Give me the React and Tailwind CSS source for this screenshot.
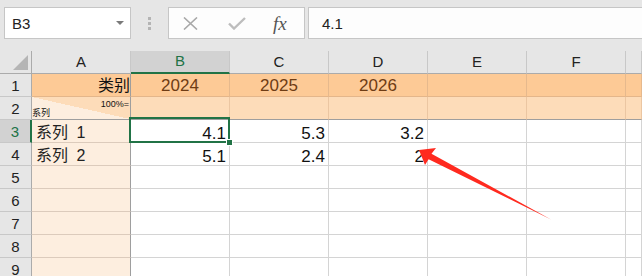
import React from "react";

const NUM = "font-['Liberation_Sans','Noto_Sans_CJK_SC',sans-serif]";

function ColHead({ label, selected }) {
  return (
    <div
      className={
        "flex items-center justify-center text-[15px] border-r border-b " +
        (selected
          ? "bg-[#d2d2d2] text-[#217346] border-r-[#c8c8c8] border-b-2 border-b-[#217346]"
          : "bg-[#e6e6e6] text-[#222] border-r-[#c8c8c8] border-b-[#ababab]")
      }
    >
      {label}
    </div>
  );
}

function RowHead({ n, selected }) {
  return (
    <div
      className={
        "flex items-center justify-center pt-[2px] text-[15px] border-b border-b-[#c8c8c8] " +
        (selected
          ? "bg-[#d2d2d2] text-[#217346] border-r-2 border-r-[#217346]"
          : "bg-[#e6e6e6] text-[#222] border-r border-r-[#ababab]")
      }
    >
      {n}
    </div>
  );
}

function Row1Cell({ children }) {
  return (
    <div className="flex items-center justify-center pt-[1px] bg-[#fdca96] border-r border-b border-r-[#e6b98d] border-b-[#e4b68a] text-[17px] leading-none text-[#6e3c14]">
      {children}
    </div>
  );
}

function Row2Cell() {
  return <div className="bg-[#fddcb9] border-r border-b border-r-[#ebc6a2] border-b-[#9e9e9e]" />;
}

function ACell({ children }) {
  return (
    <div className="flex items-end pl-[4px] pb-[1px] bg-[#fdeedf] border-r border-b border-r-[#9e9e9e] border-b-[#dccbbc] text-[16px] leading-none text-[#222] [word-spacing:4px]">
      {children}
    </div>
  );
}

function WCell({ children }) {
  return (
    <div className="flex items-end justify-end pr-[3px] bg-white border-r border-b border-[#d4d4d4] text-[17px] leading-none text-[#111]">
      {children}
    </div>
  );
}

export default function App() {
  const data = [
    ["系列 1", "4.1", "5.3", "3.2"],
    ["系列 2", "5.1", "2.4", "2"],
  ];
  return (
    <div className={"relative w-[642px] h-[276px] overflow-hidden bg-white " + NUM}>
      {/* toolbar */}
      <div className="h-[51px] bg-[#e6e6e6] flex items-start pt-[7px] pl-[4px]">
        <div className="w-[127px] h-[32px] shrink-0 bg-white border border-[#c6c6c6] flex items-center justify-between pl-[7px] pr-[6px]">
          <span className="text-[15px] text-[#222] leading-none">B3</span>
          <svg width="8" height="4" viewBox="0 0 8 4">
            <polygon points="0,0 8,0 4,4" fill="#7a7a7a" />
          </svg>
        </div>
        <div className="w-[37px] h-[32px] shrink-0 flex flex-col items-center justify-center gap-[2px]">
          <div className="w-[3px] h-[3px] bg-[#b4b4b4]" />
          <div className="w-[3px] h-[3px] bg-[#b4b4b4]" />
          <div className="w-[3px] h-[3px] bg-[#b4b4b4]" />
        </div>
        <div className="w-[137px] h-[32px] shrink-0 bg-[#fdfdfd] border border-[#c6c6c6] flex items-center pl-[14px]">
          <svg width="15" height="13" viewBox="0 0 15 13">
            <path d="M1 0.5 L14 12.5 M14 0.5 L1 12.5" stroke="#a8a8a8" strokeWidth="1.6" fill="none" />
          </svg>
          <svg width="18" height="13" viewBox="0 0 18 13" className="ml-[30px]">
            <path d="M1 6.5 L6 11.5 L17 1" stroke="#bdbdbd" strokeWidth="2.4" fill="none" />
          </svg>
          <span className="ml-[27px] font-['Liberation_Serif',serif] italic text-[19px] leading-none text-[#555]">
            fx
          </span>
        </div>
        <div className="ml-[3px] flex-1 h-[32px] bg-[#fdfdfd] border-y border-l border-[#c6c6c6] pl-[13px] flex items-center">
          <span className="text-[15px] text-[#222] leading-none">4.1</span>
        </div>
      </div>

      {/* sheet */}
      <div className="grid grid-cols-[32px_99px_99px_99px_99px_99px_99px_1fr] grid-rows-[23px_23px_23px_23px_23px_23px_23px_23px_23px_23px]">
        {/* header row */}
        <div className="relative bg-[#e6e6e6] border-r border-b border-[#ababab]">
          <svg width="31" height="22" viewBox="0 0 31 22" className="absolute left-0 top-0">
            <polygon points="13,19 28,19 28,4" fill="#b5b5b5" />
          </svg>
        </div>
        <ColHead label="A" />
        <ColHead label="B" selected />
        <ColHead label="C" />
        <ColHead label="D" />
        <ColHead label="E" />
        <ColHead label="F" />
        <ColHead label="" />

        {/* row 1 */}
        <RowHead n="1" />
        <div className="flex items-center justify-end pt-[1px] bg-[#fdca96] border-r border-b border-r-[#9e9e9e] border-b-[#e4b68a] text-[16px] leading-none text-[#111]">
          类别
        </div>
        <Row1Cell>2024</Row1Cell>
        <Row1Cell>2025</Row1Cell>
        <Row1Cell>2026</Row1Cell>
        <Row1Cell />
        <Row1Cell />
        <Row1Cell />

        {/* row 2 */}
        <RowHead n="2" />
        <div className="flex flex-col justify-between bg-[linear-gradient(to_top_right,#fdeedf_50%,#fddcb9_50%)] border-r border-b border-[#9e9e9e]">
          <div className="text-right text-[9px] leading-none pt-[3px] pr-[1px] text-[#111]">100%=</div>
          <div className="text-[9px] leading-none pb-[2px] text-[#111]">系列</div>
        </div>
        <Row2Cell />
        <Row2Cell />
        <Row2Cell />
        <Row2Cell />
        <Row2Cell />
        <Row2Cell />

        {/* data rows */}
        {data.map((r, i) => (
          <React.Fragment key={i}>
            <RowHead n={String(i + 3)} selected={i === 0} />
            <ACell>{r[0]}</ACell>
            <WCell>{r[1]}</WCell>
            <WCell>{r[2]}</WCell>
            <WCell>{r[3]}</WCell>
            <WCell />
            <WCell />
            <WCell />
          </React.Fragment>
        ))}

        {[5, 6, 7, 8, 9].map((n) => (
          <React.Fragment key={n}>
            <RowHead n={String(n)} />
            <ACell />
            <WCell />
            <WCell />
            <WCell />
            <WCell />
            <WCell />
            <WCell />
          </React.Fragment>
        ))}
      </div>

      {/* selection of B3 */}
      <div className="absolute left-[129px] top-[117px] w-[101px] h-[26px] border-2 border-[#217346] pointer-events-none" />
      <div className="absolute left-[226px] top-[139px] w-[7px] h-[7px] bg-[#217346] border border-white pointer-events-none" />

      {/* red arrow annotation */}
      <svg width="642" height="276" viewBox="0 0 642 276" className="absolute left-0 top-0 pointer-events-none">
        <polygon
          points="419,150 436,148 431.5,153.8 551,219.5 428.6,159.2 425,165"
          fill="#ff2a1f"
        />
      </svg>
    </div>
  );
}
